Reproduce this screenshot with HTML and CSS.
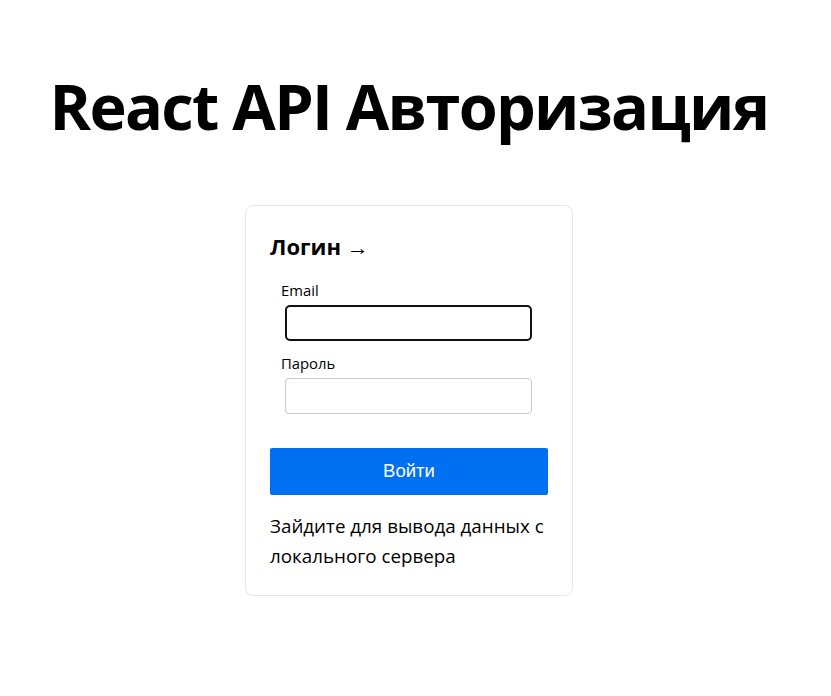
FILE: index.html
```html
<!DOCTYPE html>
<html lang="ru">
<head>
<meta charset="utf-8">
<title>React API Авторизация</title>
<link rel="stylesheet" href="styles.css">
</head>
<body>
<main class="page">
  <h1 class="title">React API Авторизация</h1>
  <section class="card">
    <h2 class="card-title">Логин →</h2>
    <form class="form">
      <label class="label" for="email">Email</label>
      <input class="input input-focus" id="email" type="email">
      <label class="label" for="pass">Пароль</label>
      <input class="input" id="pass" type="password">
    </form>
    <button class="btn" type="button">Войти</button>
    <p class="note">Зайдите для вывода данных с локального сервера</p>
  </section>
</main>
</body>
</html>
```

FILE: styles.css
```css
html, body {
  margin: 0;
  padding: 0;
  background: #fff;
}
body {
  font-family: "Open Sans", "Noto Sans", sans-serif;
  color: #000;
}
.page {
  display: flex;
  flex-direction: column;
  align-items: center;
  padding-right: 13px;
}
.title {
  margin: 68px 0 61px;
  font-size: 63px;
  font-weight: 700;
  line-height: 1.2;
  letter-spacing: -1.7px;
}
.card {
  box-sizing: border-box;
  width: 328px;
  border: 1px solid #e6e6e6;
  border-radius: 8px;
  padding: 26px 24px 24px;
}
.card-title {
  margin: 0 0 20px;
  font-size: 22px;
  font-weight: 700;
  line-height: 28px;
}
.form {
  display: flex;
  flex-direction: column;
  align-items: flex-start;
  padding-left: 11px;
}
.label {
  font-size: 14.8px;
  line-height: 20px;
  margin-bottom: 5px;
}
.input {
  box-sizing: border-box;
  width: 247px;
  height: 36px;
  margin: 0 0 12px 4px;
  border: 1px solid #c9c9c9;
  border-radius: 4px;
  background: #fff;
  outline: none;
}
.input-focus {
  border: 2px solid #111;
  border-radius: 5px;
}
.input:last-child {
  margin-bottom: 16px;
}
.btn {
  display: block;
  width: 278px;
  height: 47px;
  margin-top: 18px;
  border: none;
  border-radius: 2px;
  background: #0070f3;
  color: #fff;
  font-family: "Liberation Sans", Arial, sans-serif;
  font-size: 18.5px;
}
.note {
  margin: 16px 0 0;
  font-size: 18.8px;
  line-height: 30px;
}
```
